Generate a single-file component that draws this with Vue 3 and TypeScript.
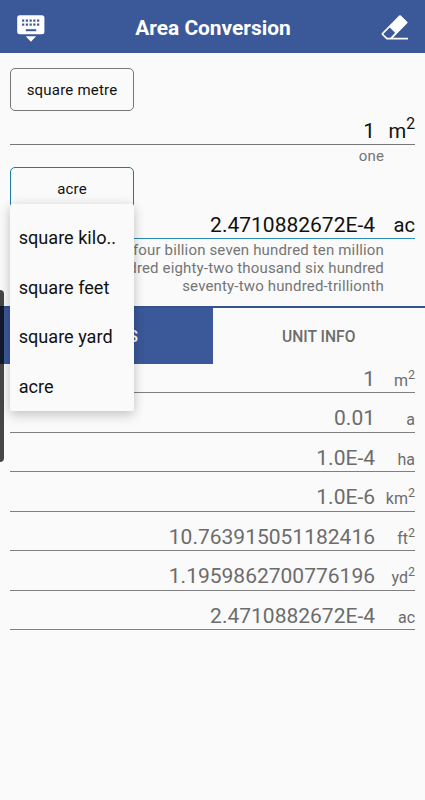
<script setup lang="ts">
import { ref } from 'vue'

interface Result {
  value: string
  unit: string
  power?: string
}

const options = ['square kilo..', 'square feet', 'square yard', 'acre']
const selected = ref('acre')
const results: Result[] = [
  { value: '1', unit: 'm', power: '2' },
  { value: '0.01', unit: 'a' },
  { value: '1.0E-4', unit: 'ha' },
  { value: '1.0E-6', unit: 'km', power: '2' },
  { value: '10.763915051182416', unit: 'ft', power: '2' },
  { value: '1.1959862700776196', unit: 'yd', power: '2' },
  { value: '2.4710882672E-4', unit: 'ac' },
]
const words = ['four billion seven hundred ten million', 'eight hundred eighty-two thousand six hundred', 'seventy-two hundred-trillionth']
</script>

<template>
  <div class="screen">
    <header class="bar">
      <svg class="keyboard" width="28" height="28" viewBox="0 0 28 28">
        <rect x="0.2" y="1.2" width="27.2" height="19" rx="2.5" fill="#fff" />
        <g fill="#3b5998">
          <template v-for="row in 2" :key="row">
            <rect v-for="col in 5" :key="col" :x="1.3 + col * 3.75" :y="1.5 + row * 4" width="2.2" height="2.2" />
          </template>
          <rect x="8.8" y="15.2" width="10.4" height="2" />
        </g>
        <path d="M8.7 22.2h10.4l-5.2 5.6z" fill="#fff" />
      </svg>
      <h1>Area Conversion</h1>
      <svg class="eraser" width="28" height="26" viewBox="0 0 28 26">
        <path d="M18.2.6q.8-.8 1.6 0l6.4 6.1q.8.8 0 1.6L12 22.7h15v1.8H5.6L1 19.9q-.9-.9 0-1.8z" fill="#fff" />
        <path d="M8.8 12.6l5.3 5.2-4.7 4.9H6.2L2.3 18.9z" fill="#3b5998" />
      </svg>
    </header>

    <section class="source">
      <button class="picker">square metre</button>
      <div class="entry"><span>1</span><span class="unit">m<sup>2</sup></span></div>
      <p class="words">one</p>
    </section>

    <section class="target">
      <div class="anchor">
        <button class="picker active">{{ selected }}</button>
        <ul class="menu">
          <li v-for="option in options" :key="option" @click="selected = option">{{ option }}</li>
        </ul>
      </div>
      <div class="entry focused"><span>2.4710882672E-4</span><span class="unit">ac</span></div>
      <p class="words"><span v-for="line in words" :key="line">{{ line }}</span></p>
    </section>

    <nav class="tabs">
      <button class="tab on">RESULTS</button>
      <button class="tab">UNIT INFO</button>
    </nav>

    <div class="results">
      <div v-for="item in results" :key="item.unit" class="result">
        <span class="value">{{ item.value }}</span>
        <span class="unit">{{ item.unit }}<sup v-if="item.power">{{ item.power }}</sup></span>
      </div>
    </div>
    <div class="handle"></div>
  </div>
</template>

<style>
body {
  background: #fafafa;
}
</style>

<style scoped>
* {
  box-sizing: border-box;
}
.screen {
  position: relative;
  height: 800px;
  overflow: hidden;
  background: #fafafa;
  font-family: Roboto, sans-serif;
  color: #111;
}
.bar {
  display: flex;
  align-items: center;
  justify-content: space-between;
  height: 52.5px;
  padding: 3px 17px 0;
  background: #3b5998;
}
.eraser {
  margin-right: -1px;
}
h1 {
  margin: 0;
  font-size: 20.9px;
  line-height: 24px;
  font-weight: 700;
  color: #fff;
}
button {
  font-family: inherit;
}
.source {
  height: 114.5px;
  padding: 15.5px 10px 0;
}
.target {
  height: 139px;
  padding: 0 10px;
}
.picker {
  display: block;
  width: 124px;
  height: 43px;
  padding: 1px 0 0;
  border: 1px solid #777;
  border-radius: 5px;
  background: transparent;
  font-size: 15px;
  letter-spacing: 0.2px;
  color: #111;
}
.picker.active {
  border-color: #1b7a9e;
}
.anchor {
  position: relative;
  width: 124px;
}
.menu {
  position: absolute;
  z-index: 2;
  top: 37px;
  left: 0;
  width: 124px;
  height: 207px;
  margin: 0;
  padding: 9px 0 0;
  list-style: none;
  border-radius: 2px;
  background: #fafafa;
  box-shadow: 0 5px 12px rgba(0, 0, 0, 0.16), 0 0 12px rgba(0, 0, 0, 0.09);
}
.menu li {
  height: 49.7px;
  padding-left: 8.7px;
  line-height: 50px;
  font-size: 18.1px;
  white-space: nowrap;
}
.entry {
  display: flex;
  align-items: baseline;
  justify-content: flex-end;
  height: 34px;
  padding-top: 7px;
  border-bottom: 1px solid #777;
  font-size: 21px;
  line-height: 26px;
}
.entry .unit {
  width: 40px;
  text-align: right;
  font-size: 20.2px;
}
sup {
  font-size: 0.78em;
  line-height: 0;
  vertical-align: 0.56em;
}
.focused {
  height: 29px;
  padding-top: 2px;
  border-bottom: 1.5px solid #2b8bb0;
}
.words {
  margin: 2px 31px 0 0;
  text-align: right;
  font-size: 15px;
  letter-spacing: 0.16px;
  line-height: 18px;
  color: #757575;
}
.words span {
  display: block;
  white-space: nowrap;
}
.tabs {
  display: flex;
  height: 58px;
  border-top: 2px solid #35528c;
}
.tab {
  flex: 1;
  padding: 1px 0 0;
  border: 0;
  background: transparent;
  font-size: 15.6px;
  font-weight: 500;
  color: #6c6c6c;
}
.tab.on {
  background: #3b5998;
  color: #fff;
}
.results {
  padding: 0 10px;
}
.result {
  display: flex;
  align-items: baseline;
  justify-content: flex-end;
  height: 39.5px;
  padding-top: 12.3px;
  border-bottom: 1px solid #808080;
  font-size: 21px;
  line-height: 26px;
  color: #6c6c6c;
}
.result:first-child {
  height: 29px;
  padding-top: 2px;
}
.result .unit {
  width: 40px;
  text-align: right;
  font-size: 16px;
}
.handle {
  position: absolute;
  z-index: 3;
  left: 0;
  top: 290px;
  width: 4px;
  height: 172px;
  border-radius: 0 4px 4px 0;
  background: rgba(0, 0, 0, 0.72);
}
</style>
